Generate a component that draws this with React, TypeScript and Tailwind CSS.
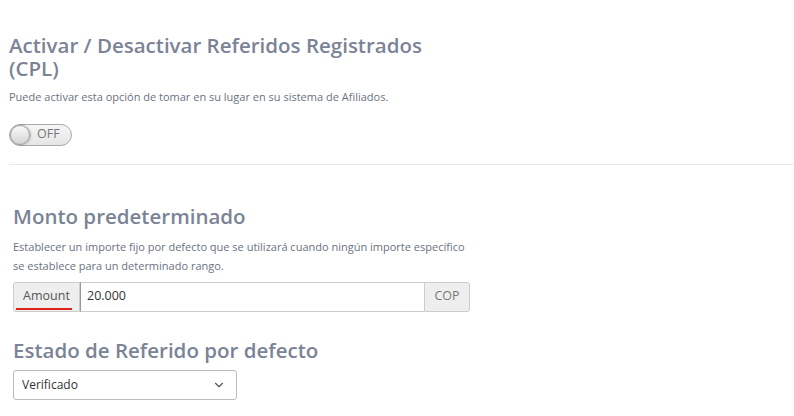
import { ChevronDown } from "lucide-react";

export default function App() {
  return (
    <div className="min-h-screen bg-white pl-[9px] pt-[34px] font-['Open_Sans',sans-serif] text-[#5f6673]">
      {/* CPL toggle */}
      <section className="w-[432px]">
        <h2 className="text-[20.5px] font-semibold leading-[23px] text-[#7b8396]">
          Activar / Desactivar Referidos Registrados (CPL)
        </h2>
        <p className="mt-[9px] text-[11px] text-[#6b7280]">
          Puede activar esta opción de tomar en su lugar en su sistema de Afiliados.
        </p>
        <button className="mt-[18px] flex h-[22px] w-[63px] items-center rounded-full border border-[#a9a9a9] bg-gradient-to-b from-[#f7f7f7] to-[#e4e4e4] pr-2">
          <span className="h-[20px] w-[20px] rounded-full border border-[#a0a0a0] bg-gradient-to-b from-[#fafafa] to-[#d4d4d4] shadow-[1px_0_2px_rgba(0,0,0,0.25)]" />
          <span className="ml-[7px] text-[12.5px] leading-none text-[#777]">OFF</span>
        </button>
      </section>

      <hr className="mt-[18px] border-t border-[#e9e9e9]" />

      <section className="pl-[4px] pt-[38px]">
        <h2 className="text-[20.5px] font-semibold leading-[26px] text-[#7b8396]">Monto predeterminado</h2>
        <p className="mt-[8px] w-[462px] text-[11px] leading-[19px] text-[#6b7280]">
          Establecer un importe fijo por defecto que se utilizará cuando ningún importe específico
          se establece para un determinado rango.
        </p>
        <div className="mt-[7px] flex h-[30px] w-[457px] text-[12.5px] text-[#555]">
          <span className="relative flex w-[67px] items-center justify-center rounded-l-[3px] border border-[#ccc] bg-[#eeeeee]">
            Amount
            <span className="absolute bottom-[1px] left-[2px] h-[2px] w-[56px] bg-[#e0231c]" />
          </span>
          <span className="flex flex-1 items-center border-y border-[#ccc] border-l border-l-[#999] bg-white px-[6px] text-[#333]">
            20.000
          </span>
          <span className="flex w-[46px] items-center justify-center rounded-r-[3px] border border-[#ccc] bg-[#eeeeee] text-[#777]">
            COP
          </span>
        </div>

        <h2 className="mt-[25px] text-[20.5px] font-semibold leading-[26px] text-[#7b8396]">
          Estado de Referido por defecto
        </h2>
        <div className="mt-[7px] flex h-[30px] w-[224px] items-center justify-between rounded-[3px] border border-[#bbb] bg-white pl-[8px] pr-[10px] text-[12px] text-[#333]">
          <span>Verificado</span>
          <ChevronDown size={14} strokeWidth={2} className="text-[#555]" />
        </div>
      </section>
    </div>
  );
}
